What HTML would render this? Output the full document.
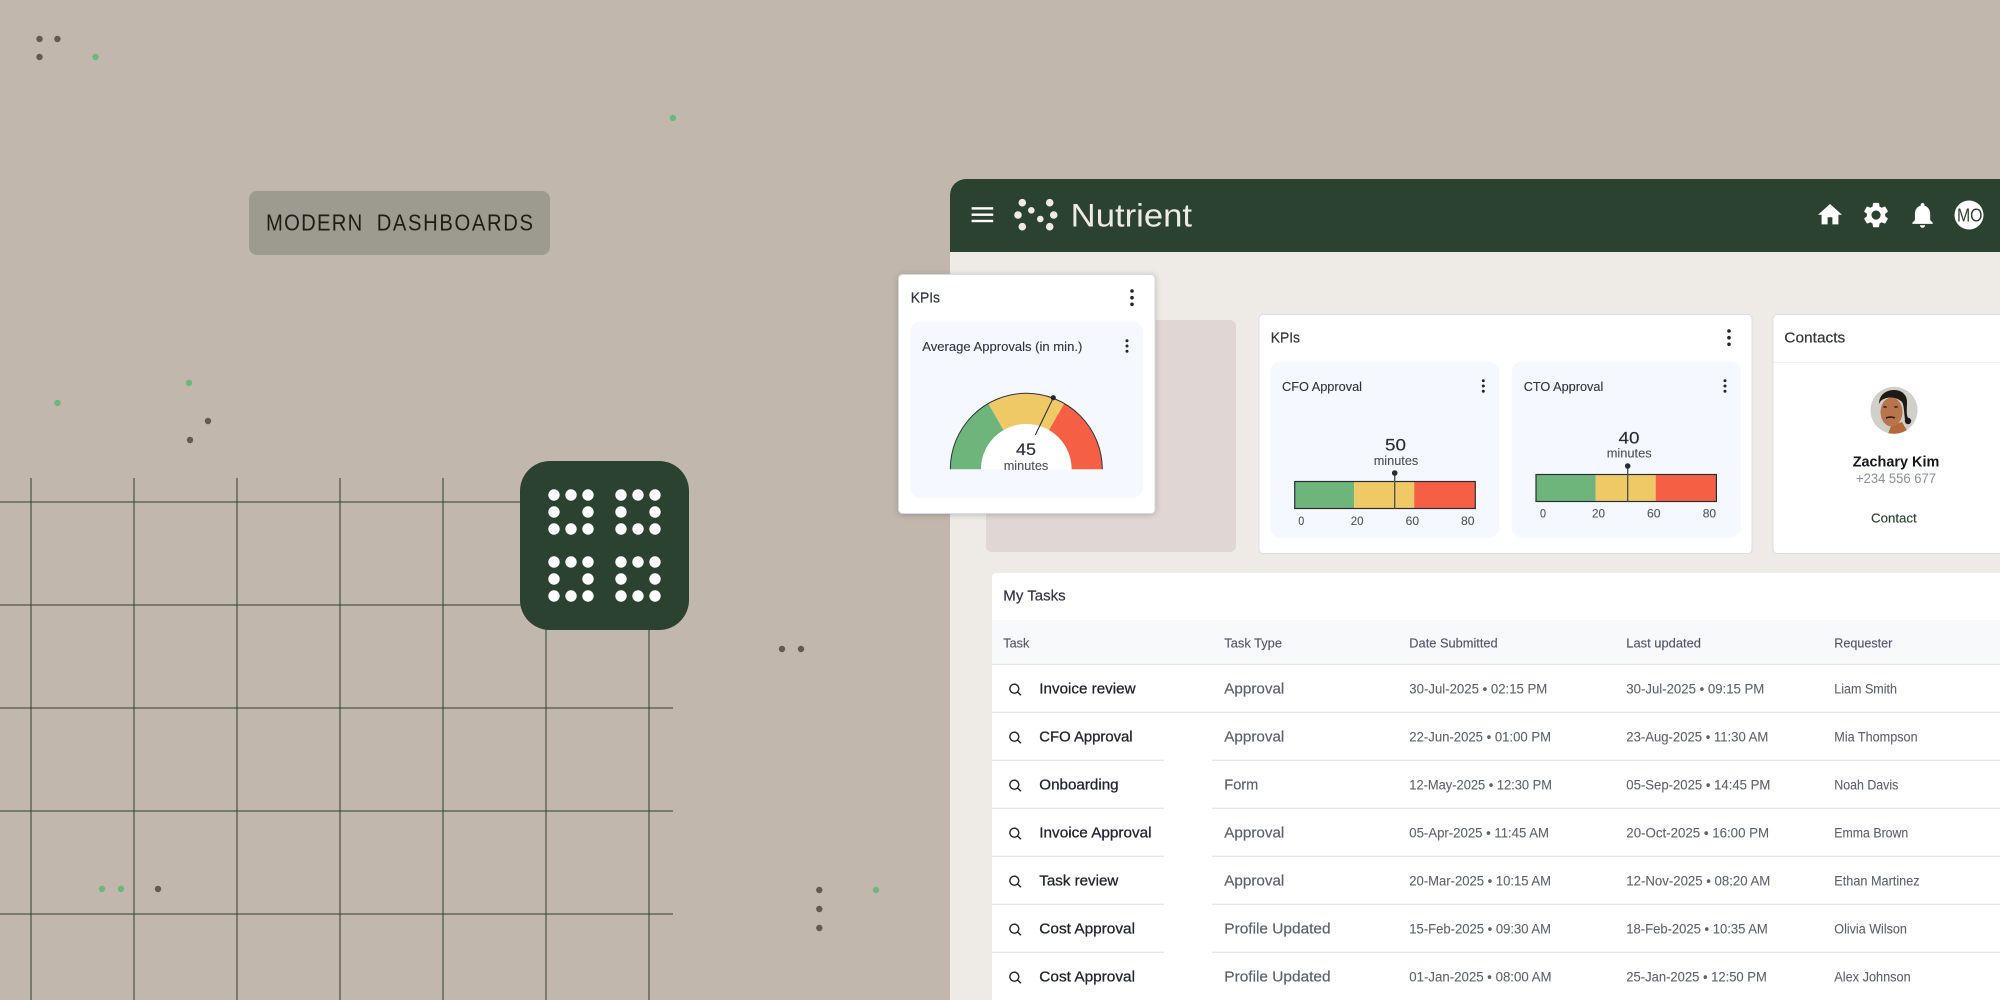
<!DOCTYPE html>
<html lang="en">
<head>
<meta charset="utf-8">
<title>Modern Dashboards</title>
<style>
html,body{margin:0;padding:0;width:2000px;height:1000px;overflow:hidden;background:#c1b7ac}
svg{display:block;position:absolute;left:0;top:0}
text{font-family:"Liberation Sans",Arial,sans-serif;filter:blur(.25px)}
.h{font-size:15px;fill:#30343e;stroke:#30343e;stroke-width:.2px}
.st{font-size:13px;fill:#30343e;stroke:#30343e;stroke-width:.12px}
.num{font-size:17px;fill:#2a2d36;stroke:#2a2d36;stroke-width:.15px}
.min{font-size:13px;fill:#4c505b;stroke:#4c505b;stroke-width:.1px}
.ax{font-size:12px;fill:#50545f;stroke:#50545f;stroke-width:.1px}
.th{font-size:13px;fill:#51586a;stroke:#51586a;stroke-width:.15px}
.n{font-size:15px;fill:#1f2430;stroke:#1f2430;stroke-width:.3px}
.t{font-size:15px;fill:#5b6271;stroke:#5b6271;stroke-width:.2px}
.d{font-size:13.4px;fill:#5b6271;stroke:#5b6271;stroke-width:.1px}
.r{font-size:13.4px;fill:#5b6271;stroke:#5b6271;stroke-width:.1px}
</style>
</head>
<body>
<svg width="2000" height="1000" viewBox="0 0 2000 1000" xmlns="http://www.w3.org/2000/svg">
<rect width="2000" height="1000" fill="#c1b7ac"/>

<!-- grid -->
<g stroke="#2c4231" stroke-width="1" fill="none">
<path d="M31 478V1000M134 478V1000M237 478V1000M340 478V1000M443 478V1000M546 620V1000M649 620V1000"/>
<path d="M0 502H530M0 605H530M0 708H673M0 811H673M0 914H673"/>
</g>

<!-- scattered dots -->
<g fill="#67594f">
<circle cx="39.5" cy="39" r="3.2"/><circle cx="57.4" cy="39" r="3.2"/><circle cx="39.5" cy="57" r="3.2"/>
<circle cx="208" cy="421" r="3.2"/><circle cx="190" cy="440" r="3.2"/>
<circle cx="782" cy="649" r="3.2"/><circle cx="801" cy="649" r="3.2"/>
<circle cx="819.3" cy="890" r="3.2"/><circle cx="819.3" cy="909" r="3.2"/><circle cx="819.3" cy="928" r="3.2"/>
<circle cx="158" cy="889" r="3.2"/>
</g>
<g fill="#6cb87c">
<circle cx="95.5" cy="57" r="3.2"/><circle cx="673" cy="118" r="3.2"/><circle cx="189" cy="383" r="3.2"/>
<circle cx="57.5" cy="403" r="3.2"/><circle cx="876" cy="890" r="3.2"/><circle cx="102" cy="889" r="3.2"/><circle cx="121" cy="889" r="3.2"/>
</g>

<!-- label -->
<rect x="249" y="191" width="301" height="64" rx="8" fill="#9d9b90"/>
<text transform="translate(266 230.7) scale(.88 1)" font-size="23" fill="#1e1c1a" textLength="109.4" lengthAdjust="spacing">MODERN</text>
<text transform="translate(376.7 230.7) scale(.88 1)" font-size="23" fill="#1e1c1a" textLength="177.6" lengthAdjust="spacing">DASHBOARDS</text>

<!-- app icon -->
<rect x="520" y="461" width="169" height="169" rx="30" fill="#2c4231"/>
<g fill="#fff">
<circle cx="554" cy="495" r="5.7"/><circle cx="571" cy="495" r="5.7"/><circle cx="588" cy="495" r="5.7"/>
<circle cx="554" cy="512" r="5.7"/><circle cx="588" cy="512" r="5.7"/>
<circle cx="554" cy="529" r="5.7"/><circle cx="571" cy="529" r="5.7"/><circle cx="588" cy="529" r="5.7"/>
<circle cx="621" cy="495" r="5.7"/><circle cx="638" cy="495" r="5.7"/><circle cx="655" cy="495" r="5.7"/>
<circle cx="621" cy="512" r="5.7"/><circle cx="655" cy="512" r="5.7"/>
<circle cx="621" cy="529" r="5.7"/><circle cx="638" cy="529" r="5.7"/><circle cx="655" cy="529" r="5.7"/>
<circle cx="554" cy="562" r="5.7"/><circle cx="571" cy="562" r="5.7"/><circle cx="588" cy="562" r="5.7"/>
<circle cx="554" cy="579" r="5.7"/><circle cx="588" cy="579" r="5.7"/>
<circle cx="554" cy="596" r="5.7"/><circle cx="571" cy="596" r="5.7"/><circle cx="588" cy="596" r="5.7"/>
<circle cx="621" cy="562" r="5.7"/><circle cx="638" cy="562" r="5.7"/><circle cx="655" cy="562" r="5.7"/>
<circle cx="621" cy="579" r="5.7"/><circle cx="655" cy="579" r="5.7"/>
<circle cx="621" cy="596" r="5.7"/><circle cx="638" cy="596" r="5.7"/><circle cx="655" cy="596" r="5.7"/>
</g>

<!-- app window -->
<path d="M950 1000V195a16 16 0 0 1 16-16H2000V1000Z" fill="#eeebe6"/>
<path d="M950 252V195a16 16 0 0 1 16-16H2000V252Z" fill="#2c4231"/>

<!-- header -->
<g fill="#fff">
<rect x="971.6" y="207.2" width="21.6" height="2.4"/><rect x="971.6" y="213.5" width="21.6" height="2.4"/><rect x="971.6" y="219.8" width="21.6" height="2.4"/>
</g>
<g fill="#eeeae4">
<circle cx="1022.3" cy="202.7" r="3.8"/><circle cx="1049.7" cy="202.7" r="3.8"/>
<circle cx="1031.3" cy="210.3" r="3.3"/><circle cx="1018" cy="215" r="3.8"/>
<circle cx="1053.7" cy="215" r="3.8"/><circle cx="1040.3" cy="219" r="3.3"/>
<circle cx="1022.3" cy="226.7" r="3.8"/><circle cx="1049.7" cy="226.7" r="3.8"/>
</g>
<text x="1070.7" y="226.7" font-size="32" fill="#eeeae4" textLength="121.3" lengthAdjust="spacingAndGlyphs">Nutrient</text>

<g fill="#fff">
<path transform="translate(1815.6 200.4) scale(1.2)" d="M10 20v-6h4v6h5v-8h3L12 3 2 12h3v8z"/>
<path transform="translate(1860.8 199.8) scale(1.27)" d="M19.14 12.94c.04-.3.06-.61.06-.94 0-.32-.02-.64-.07-.94l2.03-1.58c.18-.14.23-.41.12-.61l-1.92-3.32c-.12-.22-.37-.29-.59-.22l-2.39.96c-.5-.38-1.03-.7-1.62-.94l-.36-2.54c-.04-.24-.24-.41-.48-.41h-3.84c-.24 0-.43.17-.47.41l-.36 2.54c-.59.24-1.13.57-1.62.94l-2.39-.96c-.22-.08-.47 0-.59.22L2.74 8.87c-.12.21-.08.47.12.61l2.03 1.58c-.05.3-.09.63-.09.94s.02.64.07.94l-2.03 1.58c-.18.14-.23.41-.12.61l1.92 3.32c.12.22.37.29.59.22l2.39-.96c.5.38 1.03.7 1.62.94l.36 2.54c.05.24.24.41.48.41h3.84c.24 0 .44-.17.47-.41l.36-2.54c.59-.24 1.13-.56 1.62-.94l2.39.96c.22.08.47 0 .59-.22l1.92-3.32c.12-.22.07-.47-.12-.61l-2.01-1.58zM12 15.6c-1.98 0-3.6-1.62-3.6-3.6s1.62-3.6 3.6-3.6 3.6 1.62 3.6 3.6-1.62 3.6-3.6 3.6z"/>
<path transform="translate(1907.3 199.8) scale(1.27)" d="M12 22c1.1 0 2-.9 2-2h-4c0 1.1.89 2 2 2zm6-6v-5c0-3.07-1.64-5.64-4.5-6.32V4c0-.83-.67-1.5-1.5-1.5s-1.5.67-1.5 1.5v.68C7.63 5.36 6 7.92 6 11v5l-2 2v1h16v-1l-2-2z"/>
<circle cx="1969" cy="215" r="14.5"/>
</g>
<text x="1957" y="221.7" font-size="18" fill="#2c4231" textLength="25.5" lengthAdjust="spacingAndGlyphs">MO</text>

<!-- placeholder -->
<rect x="986" y="320" width="250" height="232" rx="6" fill="#e0d7d4"/>

<!-- KPIs card -->
<rect x="1259" y="314.5" width="493" height="239" rx="4" fill="#fff" stroke="#d9dce6"/>
<text x="1270.7" y="342.7" class="h" textLength="29.3" lengthAdjust="spacingAndGlyphs">KPIs</text>
<g fill="#23262e"><circle cx="1729" cy="331" r="1.8"/><circle cx="1729" cy="337.7" r="1.8"/><circle cx="1729" cy="344.3" r="1.8"/></g>

<rect x="1270" y="361.7" width="229.3" height="176" rx="10" fill="#f5f8fe"/>
<text x="1282" y="391" class="st" textLength="80" lengthAdjust="spacingAndGlyphs">CFO Approval</text>
<g fill="#23262e"><circle cx="1483.3" cy="380.7" r="1.5"/><circle cx="1483.3" cy="386" r="1.5"/><circle cx="1483.3" cy="391.3" r="1.5"/></g>
<text x="1385" y="450.3" class="num" textLength="21" lengthAdjust="spacingAndGlyphs">50</text>
<text x="1373.7" y="465" class="min" textLength="44.6" lengthAdjust="spacingAndGlyphs">minutes</text>
<rect x="1294.7" y="481.5" width="59.5" height="27" fill="#6db57a"/>
<rect x="1354.2" y="481.5" width="60" height="27" fill="#efc966"/>
<rect x="1414.2" y="481.5" width="61" height="27" fill="#f55f43"/>
<rect x="1294.7" y="481.5" width="180.6" height="27" fill="none" stroke="#2a2d36" stroke-width="1.2"/>
<path d="M1394.7 473V508.7" stroke="#4b4d4e" stroke-width="1.3"/>
<circle cx="1394.7" cy="473" r="2.8" fill="#2a2d36"/>
<text x="1298.3" y="525" class="ax" textLength="6" lengthAdjust="spacingAndGlyphs">0</text>
<text x="1350.7" y="525" class="ax" textLength="12.8" lengthAdjust="spacingAndGlyphs">20</text>
<text x="1405.7" y="525" class="ax" textLength="13.4" lengthAdjust="spacingAndGlyphs">60</text>
<text x="1461" y="525" class="ax" textLength="13.6" lengthAdjust="spacingAndGlyphs">80</text>

<rect x="1511.7" y="361.7" width="229.3" height="176" rx="10" fill="#f5f8fe"/>
<text x="1523.7" y="391" class="st" textLength="79.6" lengthAdjust="spacingAndGlyphs">CTO Approval</text>
<g fill="#23262e"><circle cx="1725" cy="380.7" r="1.5"/><circle cx="1725" cy="386" r="1.5"/><circle cx="1725" cy="391.3" r="1.5"/></g>
<text x="1618.5" y="443.3" class="num" textLength="21" lengthAdjust="spacingAndGlyphs">40</text>
<text x="1606.7" y="457.7" class="min" textLength="45" lengthAdjust="spacingAndGlyphs">minutes</text>
<rect x="1536" y="474.5" width="59.7" height="27" fill="#6db57a"/>
<rect x="1595.7" y="474.5" width="60" height="27" fill="#efc966"/>
<rect x="1655.7" y="474.5" width="60.7" height="27" fill="#f55f43"/>
<rect x="1536" y="474.5" width="180.4" height="27" fill="none" stroke="#2a2d36" stroke-width="1.2"/>
<path d="M1627.7 466V501.7" stroke="#4b4d4e" stroke-width="1.3"/>
<circle cx="1627.7" cy="466" r="2.8" fill="#2a2d36"/>
<text x="1540" y="517.7" class="ax" textLength="6" lengthAdjust="spacingAndGlyphs">0</text>
<text x="1592" y="517.7" class="ax" textLength="13" lengthAdjust="spacingAndGlyphs">20</text>
<text x="1647" y="517.7" class="ax" textLength="13.6" lengthAdjust="spacingAndGlyphs">60</text>
<text x="1702.7" y="517.7" class="ax" textLength="13.4" lengthAdjust="spacingAndGlyphs">80</text>

<!-- Contacts card -->
<rect x="1773" y="314.5" width="240" height="239" rx="4" fill="#fff" stroke="#d9dce6"/>
<rect x="1773.5" y="362" width="226.5" height="1" fill="#f0f1f5"/>
<text x="1784.3" y="342.7" class="h" textLength="61" lengthAdjust="spacingAndGlyphs">Contacts</text>
<clipPath id="av"><circle cx="1894" cy="410.3" r="23.5"/></clipPath>
<g clip-path="url(#av)">
<rect x="1870" y="386" width="48" height="48" fill="#d0cfca"/>
<path d="M1888 434L1891 426L1902 422L1909 434Z" fill="#b5683a"/>
<ellipse cx="1891.5" cy="412" rx="11" ry="14.5" fill="#b8744a"/>
<path d="M1879 404C1879 394 1887 390 1894 390C1902 390 1907 395 1907 402C1907 408 1906 414 1908 418L1905 420C1904 412 1904 405 1902 402C1898 398 1890 396 1884 399C1881 400 1880 402 1879 404Z" fill="#1f1815"/>
<circle cx="1908" cy="421" r="3.2" fill="#1f1815"/>
<ellipse cx="1885" cy="407" rx="2" ry=".7" fill="#2a1c14"/>
<ellipse cx="1896" cy="407" rx="2" ry=".7" fill="#2a1c14"/>
<path d="M1886 418q5-2 9 0" fill="none" stroke="#2a1c14" stroke-width="1.5"/>
</g>
<text x="1852.7" y="466.3" font-size="15" font-weight="700" fill="#15171c" textLength="86.6" lengthAdjust="spacingAndGlyphs">Zachary Kim</text>
<text x="1856" y="483" font-size="13.5" fill="#8b8f9c" textLength="80" lengthAdjust="spacingAndGlyphs">+234 556 677</text>
<text x="1871" y="522.7" font-size="13" fill="#2c4231" stroke="#2c4231" stroke-width=".15" textLength="45.7" lengthAdjust="spacingAndGlyphs">Contact</text>

<!-- Tasks -->
<path d="M992 1000V577a4 4 0 0 1 4-4H2000V1000Z" fill="#fff"/>
<text x="1003.3" y="600.3" class="h" textLength="62.4" lengthAdjust="spacingAndGlyphs">My Tasks</text>
<rect x="992" y="620" width="1008" height="44" fill="#f8f9fb"/>
<g stroke="#e4e6ec" stroke-width="1.2">
<path d="M992 664.4H2000M992 712.4H2000"/>
<path d="M992 760.4H1164M1212 760.4H2000M992 808.4H1164M1212 808.4H2000M992 856.4H1164M1212 856.4H2000M992 904.4H1164M1212 904.4H2000M992 952.4H1164M1212 952.4H2000"/>
</g>
<text x="1003.3" y="647.3" class="th" textLength="26" lengthAdjust="spacingAndGlyphs">Task</text>
<text x="1224.3" y="647.3" class="th" textLength="57.7" lengthAdjust="spacingAndGlyphs">Task Type</text>
<text x="1409.3" y="647.3" class="th" textLength="88.4" lengthAdjust="spacingAndGlyphs">Date Submitted</text>
<text x="1626.3" y="647.3" class="th" textLength="74.7" lengthAdjust="spacingAndGlyphs">Last updated</text>
<text x="1834.3" y="647.3" class="th" textLength="58" lengthAdjust="spacingAndGlyphs">Requester</text>

<g fill="none" stroke="#1f2430" stroke-width="1.4">
<g><circle cx="1014.3" cy="688.7" r="4.5"/><path d="M1017.7 692.1L1021 695.3"/></g>
<g transform="translate(0 48)"><circle cx="1014.3" cy="688.7" r="4.5"/><path d="M1017.7 692.1L1021 695.3"/></g>
<g transform="translate(0 96)"><circle cx="1014.3" cy="688.7" r="4.5"/><path d="M1017.7 692.1L1021 695.3"/></g>
<g transform="translate(0 144)"><circle cx="1014.3" cy="688.7" r="4.5"/><path d="M1017.7 692.1L1021 695.3"/></g>
<g transform="translate(0 192)"><circle cx="1014.3" cy="688.7" r="4.5"/><path d="M1017.7 692.1L1021 695.3"/></g>
<g transform="translate(0 240)"><circle cx="1014.3" cy="688.7" r="4.5"/><path d="M1017.7 692.1L1021 695.3"/></g>
<g transform="translate(0 288)"><circle cx="1014.3" cy="688.7" r="4.5"/><path d="M1017.7 692.1L1021 695.3"/></g>
</g>

<text x="1039.3" y="693.3" class="n" textLength="96.3" lengthAdjust="spacingAndGlyphs">Invoice review</text>
<text x="1224.3" y="693.3" class="t" textLength="60" lengthAdjust="spacingAndGlyphs">Approval</text>
<text x="1409.3" y="693.6" class="d" textLength="138" lengthAdjust="spacingAndGlyphs">30-Jul-2025 • 02:15 PM</text>
<text x="1626.3" y="693.6" class="d" textLength="138" lengthAdjust="spacingAndGlyphs">30-Jul-2025 • 09:15 PM</text>
<text x="1834.3" y="693.6" class="r" textLength="62.7" lengthAdjust="spacingAndGlyphs">Liam Smith</text>

<text x="1039.3" y="741.3" class="n" textLength="93.3" lengthAdjust="spacingAndGlyphs">CFO Approval</text>
<text x="1224.3" y="741.3" class="t" textLength="60" lengthAdjust="spacingAndGlyphs">Approval</text>
<text x="1409.3" y="741.6" class="d" textLength="141.7" lengthAdjust="spacingAndGlyphs">22-Jun-2025 • 01:00 PM</text>
<text x="1626.3" y="741.6" class="d" textLength="142" lengthAdjust="spacingAndGlyphs">23-Aug-2025 • 11:30 AM</text>
<text x="1834.3" y="741.6" class="r" textLength="83.3" lengthAdjust="spacingAndGlyphs">Mia Thompson</text>

<text x="1039.3" y="789.3" class="n" textLength="79.3" lengthAdjust="spacingAndGlyphs">Onboarding</text>
<text x="1224.3" y="789.3" class="t" textLength="34" lengthAdjust="spacingAndGlyphs">Form</text>
<text x="1409.3" y="789.6" class="d" textLength="142.7" lengthAdjust="spacingAndGlyphs">12-May-2025 • 12:30 PM</text>
<text x="1626.3" y="789.6" class="d" textLength="144" lengthAdjust="spacingAndGlyphs">05-Sep-2025 • 14:45 PM</text>
<text x="1834.3" y="789.6" class="r" textLength="64" lengthAdjust="spacingAndGlyphs">Noah Davis</text>

<text x="1039.3" y="837.3" class="n" textLength="112.3" lengthAdjust="spacingAndGlyphs">Invoice Approval</text>
<text x="1224.3" y="837.3" class="t" textLength="60" lengthAdjust="spacingAndGlyphs">Approval</text>
<text x="1409.3" y="837.6" class="d" textLength="139.7" lengthAdjust="spacingAndGlyphs">05-Apr-2025 • 11:45 AM</text>
<text x="1626.3" y="837.6" class="d" textLength="142.8" lengthAdjust="spacingAndGlyphs">20-Oct-2025 • 16:00 PM</text>
<text x="1834.3" y="837.6" class="r" textLength="74" lengthAdjust="spacingAndGlyphs">Emma Brown</text>

<text x="1039.3" y="885.3" class="n" textLength="79" lengthAdjust="spacingAndGlyphs">Task review</text>
<text x="1224.3" y="885.3" class="t" textLength="60" lengthAdjust="spacingAndGlyphs">Approval</text>
<text x="1409.3" y="885.6" class="d" textLength="141.7" lengthAdjust="spacingAndGlyphs">20-Mar-2025 • 10:15 AM</text>
<text x="1626.3" y="885.6" class="d" textLength="144" lengthAdjust="spacingAndGlyphs">12-Nov-2025 • 08:20 AM</text>
<text x="1834.3" y="885.6" class="r" textLength="85.3" lengthAdjust="spacingAndGlyphs">Ethan Martinez</text>

<text x="1039.3" y="933.3" class="n" textLength="95.7" lengthAdjust="spacingAndGlyphs">Cost Approval</text>
<text x="1224.3" y="933.3" class="t" textLength="106.3" lengthAdjust="spacingAndGlyphs">Profile Updated</text>
<text x="1409.3" y="933.6" class="d" textLength="141.7" lengthAdjust="spacingAndGlyphs">15-Feb-2025 • 09:30 AM</text>
<text x="1626.3" y="933.6" class="d" textLength="141.5" lengthAdjust="spacingAndGlyphs">18-Feb-2025 • 10:35 AM</text>
<text x="1834.3" y="933.6" class="r" textLength="72.6" lengthAdjust="spacingAndGlyphs">Olivia Wilson</text>

<text x="1039.3" y="981.3" class="n" textLength="95.7" lengthAdjust="spacingAndGlyphs">Cost Approval</text>
<text x="1224.3" y="981.3" class="t" textLength="106.3" lengthAdjust="spacingAndGlyphs">Profile Updated</text>
<text x="1409.3" y="981.6" class="d" textLength="142.2" lengthAdjust="spacingAndGlyphs">01-Jan-2025 • 08:00 AM</text>
<text x="1626.3" y="981.6" class="d" textLength="140.5" lengthAdjust="spacingAndGlyphs">25-Jan-2025 • 12:50 PM</text>
<text x="1834.3" y="981.6" class="r" textLength="76.4" lengthAdjust="spacingAndGlyphs">Alex Johnson</text>

<!-- floating KPI card -->
<rect x="898.5" y="274.5" width="256.5" height="239" rx="4" fill="#fff" stroke="#d8d9e2" style="filter:drop-shadow(0 1px 3px rgba(40,40,50,.25))"/>
<text x="910.7" y="302.7" class="h" textLength="29.3" lengthAdjust="spacingAndGlyphs">KPIs</text>
<g fill="#23262e"><circle cx="1132" cy="291" r="1.8"/><circle cx="1132" cy="297.7" r="1.8"/><circle cx="1132" cy="304.3" r="1.8"/></g>
<rect x="910" y="321.7" width="233" height="176" rx="10" fill="#f5f8fe"/>
<text x="922.3" y="351" class="st" textLength="160" lengthAdjust="spacingAndGlyphs">Average Approvals (in min.)</text>
<g fill="#23262e"><circle cx="1127" cy="340.7" r="1.5"/><circle cx="1127" cy="346" r="1.5"/><circle cx="1127" cy="351.3" r="1.5"/></g>
<path d="M950.3 469.3A76 76 0 0 1 988.3 403.5L1003.65 430.07A45.3 45.3 0 0 0 981 469.3Z" fill="#6db57a"/>
<path d="M988.3 403.5A76 76 0 0 1 1064.3 403.5L1048.95 430.07A45.3 45.3 0 0 0 1003.65 430.07Z" fill="#efc966"/>
<path d="M1064.3 403.5A76 76 0 0 1 1102.3 469.3L1071.6 469.3A45.3 45.3 0 0 0 1048.95 430.07Z" fill="#f55f43"/>
<path d="M981 469.3A45.3 45.3 0 0 1 1071.6 469.3Z" fill="#fff"/>
<path d="M950.3 469.3A76 76 0 0 1 1102.3 469.3" fill="none" stroke="#2f333d" stroke-width="1"/>
<path d="M1053.3 397.7L1035.3 435" stroke="#2f333d" stroke-width="1.1"/>
<circle cx="1053.3" cy="397.7" r="2.6" fill="#23262e"/>
<text x="1016" y="455" class="num" textLength="20" lengthAdjust="spacingAndGlyphs">45</text>
<text x="1003.7" y="470" class="min" textLength="44.6" lengthAdjust="spacingAndGlyphs">minutes</text>
</svg>
</body>
</html>
